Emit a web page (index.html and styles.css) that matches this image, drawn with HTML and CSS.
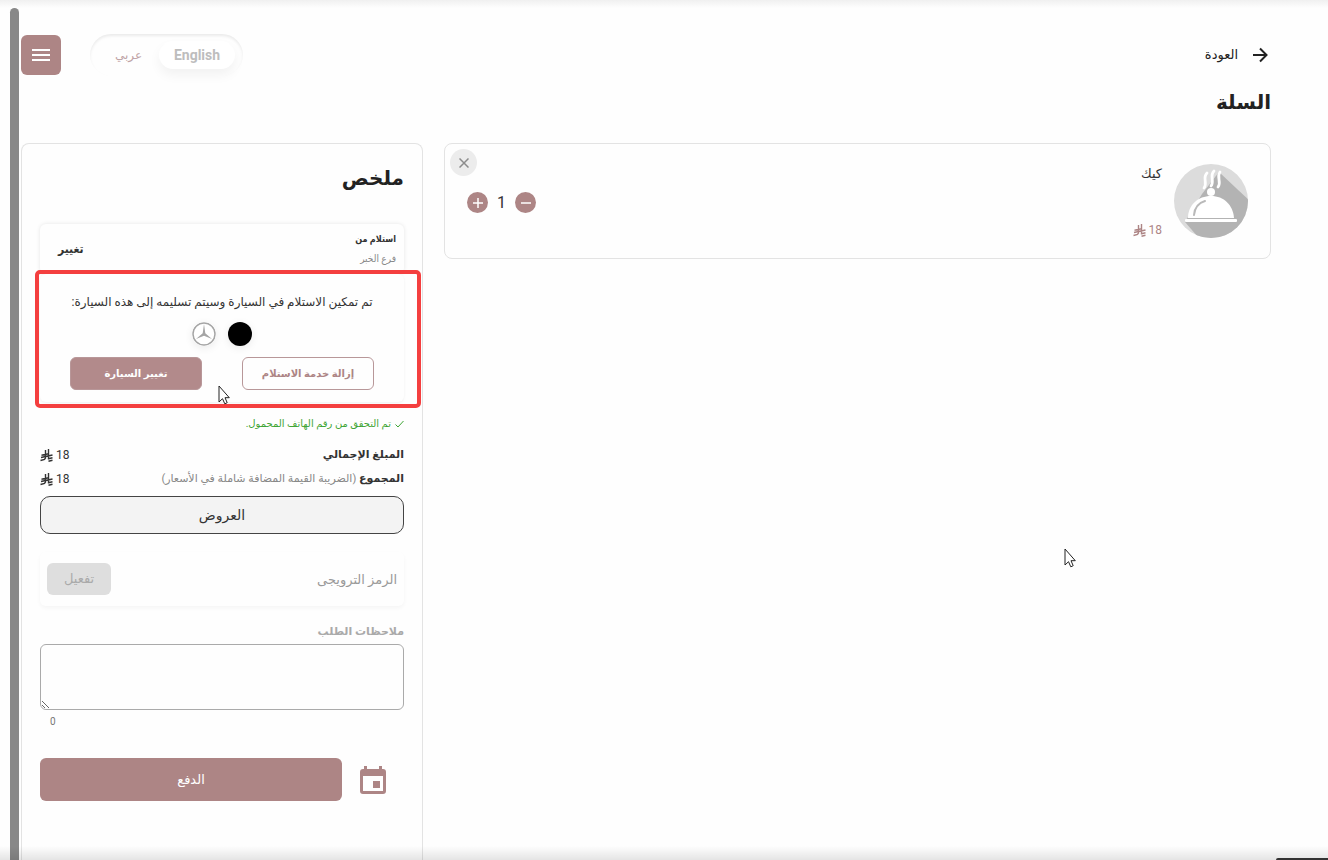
FILE: index.html
```html
<!DOCTYPE html>
<html lang="ar" dir="rtl">
<head>
    <meta charset="UTF-8">
    <meta name="viewport" content="width=device-width, initial-scale=1.0">
    <title>السلة</title>
    <link rel="stylesheet" href="styles.css">
</head>
<body>
    <svg class="defs" width="0" height="0" aria-hidden="true">
        <symbol id="riyal" viewBox="0 0 13 13">
            <path d="M5.500 1V9L4.500 10.500 0.500 11.500M8.500 0V10.500M1 8.500L12.500 6M1.500 6.200L8.500 4.700M8.500 12.300L12.500 11.300M8.500 9.700L12.500 8.700" fill="none" stroke="currentColor" stroke-width="1.400"/>
        </symbol>
        <symbol id="pointer" viewBox="0 0 12 20">
            <path d="M1 1V17L4.500 13.700 6.800 18.800 9.200 17.700 7 12.700H11.300Z" fill="#fff" stroke="#222" stroke-width="1"/>
        </symbol>
    </svg>

    <div class="app">
        <main class="page">
            <header class="topbar">
                <a class="back" href="#">
                    <svg width="16" height="16" viewBox="0 0 16 16" fill="none" stroke="currentColor" stroke-width="2"><path d="M1 8H14M8 1.500L14.500 8 8 14.500"/></svg>
                    العودة
                </a>
                <div class="topbar-end">
                    <div class="lang">
                        <button class="lang-button">عربي</button>
                        <button class="lang-button active">English</button>
                    </div>
                    <button class="menu-button" aria-label="القائمة">
                        <svg width="18" height="14" viewBox="0 0 18 14" stroke="#fff" stroke-width="2"><path d="M0 2H18M0 7H18M0 12H18"/></svg>
                    </button>
                </div>
            </header>

            <h1>السلة</h1>

            <div class="columns">
                <section class="cart-item">
                    <svg class="item-image" viewBox="0 0 74 74">
                        <defs><clipPath id="round"><circle cx="37" cy="37" r="37"/></clipPath></defs>
                        <g clip-path="url(#round)">
                            <rect width="74" height="74" fill="#dcdcdc"/>
                            <path d="M45 8L80 41V80H30L11 58 28 30Z" fill="#b3b3b3"/>
                        </g>
                        <g fill="#fff">
                            <rect x="11" y="55" width="52" height="3" rx="1"/>
                            <path d="M14 54C14 41 24 32 37 32S59 41 60 54Z"/>
                            <circle cx="37" cy="28" r="4"/>
                        </g>
                        <path d="M20 51Q21 40 31 37" fill="none" stroke="#b9b9b9" stroke-width="2" stroke-linecap="round"/>
                        <path d="M30 24C34 19 28 14 33 9M37 22C41 17 35 12 40 7M44 23C48 18 42 13 46 8" fill="none" stroke="#fff" stroke-width="2.800" stroke-linecap="round"/>
                    </svg>
                    <div class="item-info">
                        <h2>كيك</h2>
                        <span class="price item-price">18 <svg class="riyal"><use href="#riyal"/></svg></span>
                    </div>
                    <div class="quantity">
                        <button class="round-button" aria-label="إنقاص"><svg width="12" height="12" viewBox="0 0 12 12" stroke="#fff" stroke-width="1.500"><path d="M1 6H11"/></svg></button>
                        <span>1</span>
                        <button class="round-button" aria-label="زيادة"><svg width="12" height="12" viewBox="0 0 12 12" stroke="#fff" stroke-width="1.500"><path d="M1 6H11M6 1V11"/></svg></button>
                    </div>
                    <button class="remove-button" aria-label="حذف"><svg width="10" height="10" viewBox="0 0 10 10" stroke="#8c8c8c" stroke-width="1.500"><path d="M0.500 0.500L9.500 9.500M9.500 0.500L0.500 9.500"/></svg></button>
                </section>

                <aside class="summary">
                    <h2 class="summary-title">ملخص</h2>

                    <div class="branch">
                        <div>
                            <strong>استلام من</strong>
                            <p>فرع الخبر</p>
                        </div>
                        <button class="link-button">تغيير</button>
                    </div>

                    <div class="car">
                        <p>تم تمكين الاستلام في السيارة وسيتم تسليمه إلى هذه السيارة:</p>
                        <div class="car-details">
                            <span class="car-color"></span>
                            <svg class="car-brand" viewBox="0 0 24 24"><circle cx="12" cy="12" r="11" fill="#fff" stroke="#a5a5a5" stroke-width="1.500"/><path d="M12 2L13.300 11.200 20 17 12 13.800 4 17 10.700 11.200Z" fill="#a5a5a5"/></svg>
                        </div>
                        <div class="car-actions">
                            <button class="outline-button">إزالة خدمة الاستلام</button>
                            <button class="solid-button">تغيير السيارة</button>
                        </div>
                        <div class="highlight"></div>
                        <svg class="pointer car-pointer"><use href="#pointer"/></svg>
                    </div>

                    <p class="verified">
                        <svg width="9" height="8" viewBox="0 0 9 8" fill="none" stroke="currentColor"><path d="M0.500 4.500L3 7 8.500 1"/></svg>
                        تم التحقق من رقم الهاتف المحمول.
                    </p>

                    <div class="total-row">
                        <span><b>المبلغ الإجمالي</b></span>
                        <span class="price">18 <svg class="riyal"><use href="#riyal"/></svg></span>
                    </div>
                    <div class="total-row">
                        <span><b>المجموع</b> <small>(الضريبة القيمة المضافة شاملة في الأسعار)</small></span>
                        <span class="price">18 <svg class="riyal"><use href="#riyal"/></svg></span>
                    </div>

                    <button class="offers-button">العروض</button>

                    <div class="promo">
                        <input type="text" placeholder="الرمز الترويجى" aria-label="الرمز الترويجى">
                        <button disabled>تفعيل</button>
                    </div>

                    <label class="notes-label" for="notes">ملاحظات الطلب</label>
                    <textarea id="notes"></textarea>
                    <div class="counter">0</div>

                    <div class="checkout">
                        <button class="schedule-button" aria-label="جدولة الطلب">
                            <svg width="26" height="28" viewBox="0 0 26 28"><path fill="currentColor" fill-rule="evenodd" d="M4 0H7V3H19V0H22V3H23Q26 3 26 6V25Q26 28 23 28H3Q0 28 0 25V6Q0 3 3 3H4ZM3 10V25H23V10ZM13 15H20V22H13Z"/></svg>
                        </button>
                        <button class="pay-button">الدفع</button>
                    </div>
                </aside>
            </div>
        </main>
        <div class="scroll-track"></div>
    </div>

    <svg class="pointer page-pointer"><use href="#pointer"/></svg>
    <div class="corner-bar"></div>
</body>
</html>
```

FILE: styles.css
```css
* {
    margin: 0;
    padding: 0;
    box-sizing: border-box;
}

body {
    font-family: Roboto, 'DejaVu Sans', sans-serif;
    font-size: 13px;
    line-height: 20px;
    color: #333;
    background: #fefefe;
}

button,
input,
textarea {
    font: inherit;
    border: none;
    background: none;
}

button {
    cursor: pointer;
}

svg {
    display: block;
    flex: none;
}

.defs {
    position: absolute;
}

.app {
    position: relative;
    display: flex;
    height: 100vh;
    overflow: hidden;
}

.app::before,
.app::after {
    content: '';
    position: absolute;
    left: 0;
    right: 0;
    pointer-events: none;
}

.app::before {
    top: 0;
    height: 8px;
    background: linear-gradient(#f0f0f0, #fefefe);
}

.app::after {
    bottom: 0;
    height: 14px;
    background: linear-gradient(rgba(0, 0, 0, 0), rgba(0, 0, 0, 0.1));
}

.scroll-track {
    width: 9px;
    margin: 8px 0 0 10px;
    border-radius: 5px 5px 0 0;
    background: #888;
}

.page {
    flex: 1;
    display: flex;
    flex-direction: column;
    padding: 34px 57px 0 2px;
}

.topbar,
.topbar-end {
    display: flex;
    align-items: center;
    justify-content: space-between;
}

.topbar-end {
    gap: 29px;
}

.back {
    display: flex;
    align-items: center;
    gap: 14px;
    padding-right: 3px;
    color: #222;
    text-decoration: none;
}

.lang {
    display: flex;
    align-items: center;
    direction: ltr;
    width: 153px;
    height: 42px;
    padding: 0 8px;
    border-radius: 21px;
    box-shadow: inset 0 2px 3px rgba(0, 0, 0, 0.08);
}

.lang-button {
    flex: 1;
    height: 28px;
    border-radius: 14px;
    font-size: 12px;
    color: #c0a4a6;
}

.lang-button.active {
    flex: 0 0 76px;
    font-size: 14px;
    font-weight: bold;
    color: #bdbdbd;
    background: #fff;
    box-shadow: 0 6px 12px rgba(0, 0, 0, 0.05);
}

.menu-button {
    display: flex;
    align-items: center;
    justify-content: center;
    width: 40px;
    height: 40px;
    border-radius: 6px;
    background: #ad8585;
}

h1 {
    margin: 10px 0 25px;
    font-size: 20px;
    line-height: 32px;
    color: #222;
}

.columns {
    flex: 1;
    display: grid;
    grid-template-columns: 1fr 402px;
    gap: 21px;
    min-height: 0;
}

.cart-item {
    position: relative;
    align-self: start;
    display: flex;
    gap: 12px;
    padding: 20px 22px;
    border: 1px solid #e3e3e3;
    border-radius: 8px;
}

.item-image {
    width: 74px;
    height: 74px;
}

.item-info {
    flex: 1;
    display: flex;
    flex-direction: column;
    justify-content: space-between;
    align-items: flex-start;
}

.item-info h2 {
    font-size: 13px;
    font-weight: normal;
}

.price {
    display: inline-flex;
    align-items: center;
    gap: 3px;
    font-size: 12px;
}

.item-price {
    height: 16px;
    color: #ad8585;
}

.riyal {
    width: 13px;
    height: 13px;
}

.quantity {
    display: flex;
    align-items: center;
    align-self: flex-start;
    gap: 9px;
    margin-top: 28px;
    font-size: 16px;
}

.round-button,
.remove-button {
    display: flex;
    align-items: center;
    justify-content: center;
    width: 21px;
    height: 21px;
    border-radius: 50%;
    background: #ad8585;
}

.remove-button {
    position: absolute;
    top: 5px;
    left: 5px;
    width: 27px;
    height: 27px;
    background: #ececec;
}

.summary {
    padding: 18px 18px 0;
    border: 1px solid #e3e3e3;
    border-bottom: none;
    border-radius: 8px 8px 0 0;
}

.summary-title {
    font-size: 20px;
    line-height: 32px;
    color: #222;
}

.branch {
    display: flex;
    align-items: center;
    justify-content: space-between;
    height: 50px;
    margin-top: 30px;
    padding: 0 8px 0 18px;
    border-radius: 6px;
    box-shadow: 0 0 4px rgba(0, 0, 0, 0.1);
    font-family: Roboto, 'DejaVu Sans Condensed', sans-serif;
    font-size: 10px;
}

.branch strong {
    font-size: 9px;
}

.branch p {
    color: #888;
}

.link-button {
    font-size: 12px;
    font-weight: bold;
    color: #333;
}

.car {
    position: relative;
    height: 128px;
    padding: 18px 30px 0;
    border-radius: 6px;
    box-shadow: 0 1px 3px rgba(0, 0, 0, 0.06);
    background: #fefefe;
    font-size: 12px;
    text-align: center;
    white-space: nowrap;
}

.car-details {
    display: flex;
    justify-content: center;
    gap: 12px;
    margin: 10px 0 11px;
}

.car-color,
.car-brand {
    width: 24px;
    height: 24px;
    border-radius: 50%;
    box-shadow: 0 2px 8px rgba(0, 0, 0, 0.08);
}

.car-color {
    background: #000;
}

.car-actions {
    display: flex;
    justify-content: space-between;
}

.outline-button,
.solid-button {
    width: 132px;
    height: 33px;
    border: 1px solid #b89799;
    border-radius: 6px;
    font-size: 10px;
    font-weight: bold;
    color: #ad8585;
}

.solid-button {
    color: #fff;
    background: #b28a8b;
}

/* frame drawn over the pickup section */
.highlight {
    position: absolute;
    inset: -4px -17px -6px -5px;
    border: 4px solid #f43f3f;
    border-radius: 5px;
    pointer-events: none;
}

.pointer {
    position: absolute;
    width: 12px;
    height: 20px;
    pointer-events: none;
}

.car-pointer {
    left: 178px;
    top: 111px;
}

.page-pointer {
    left: 1064px;
    top: 548px;
}

.verified {
    display: flex;
    align-items: center;
    gap: 4px;
    margin: 12px 0 9px;
    font-size: 10px;
    line-height: 20px;
    color: #3fa535;
}

.total-row {
    display: flex;
    align-items: center;
    justify-content: space-between;
    height: 24px;
    font-size: 11px;
    white-space: nowrap;
}

.total-row small {
    font-size: 11px;
    color: #888;
}

.offers-button {
    width: 100%;
    height: 38px;
    margin-top: 5px;
    border: 1px solid #444;
    border-radius: 10px;
    font-size: 14px;
    color: #333;
    background: #f3f3f3;
}

.promo {
    display: flex;
    align-items: center;
    height: 54px;
    margin: 18px 0 16px;
    padding: 0 7px;
    border-radius: 6px;
    box-shadow: 0 2px 4px rgba(0, 0, 0, 0.04);
}

.promo input {
    flex: 1;
    min-width: 0;
    height: 32px;
}

.promo input::placeholder {
    color: #999;
}

.promo button {
    width: 64px;
    height: 32px;
    border-radius: 6px;
    color: #aaa;
    background: #dedede;
}

.notes-label {
    display: block;
    font-size: 11px;
    font-weight: bold;
    color: #aaa;
}

textarea {
    display: block;
    width: 100%;
    height: 66px;
    margin-top: 2px;
    padding: 8px;
    border: 1px solid #aaa;
    border-radius: 6px;
}

.counter {
    padding-left: 10px;
    font-size: 10px;
    line-height: 24px;
    text-align: left;
    color: #777;
}

.checkout {
    display: flex;
    align-items: center;
    gap: 18px;
    margin-top: 24px;
    padding-right: 18px;
}

.schedule-button {
    color: #ad8585;
}

.pay-button {
    flex: 1;
    height: 43px;
    border-radius: 6px;
    color: #fff;
    background: #ad8585;
}

.corner-bar {
    position: absolute;
    right: 0;
    bottom: 0;
    width: 52px;
    height: 2px;
    border-radius: 2px 0 0 0;
    background: #333;
}
```
